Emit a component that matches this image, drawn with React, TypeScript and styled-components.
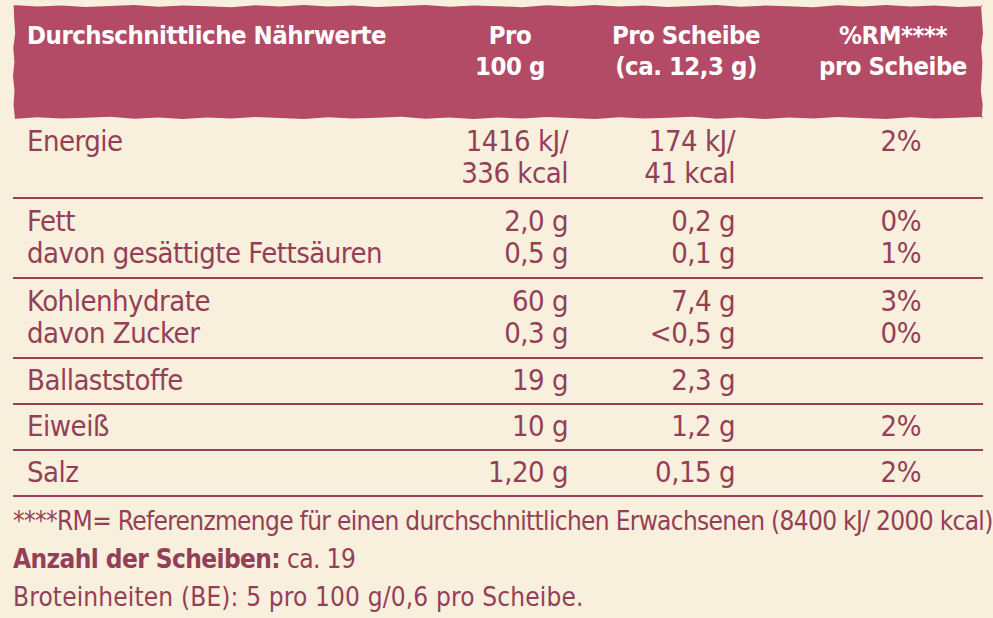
import React from "react";
import styled, { createGlobalStyle } from "styled-components";

const GlobalStyle = createGlobalStyle`
  html, body {
    margin: 0;
    background: #f8efdc;
  }
  body {
    font-family: "DejaVu Sans Condensed", "DejaVu Sans", "Liberation Sans", sans-serif;
    color: #943f58;
  }
`;

// jagged, torn paper edge for the header band
const tornEdge = (() => {
  const pts: string[] = [];
  const wob = [0, 1.5, 0.5, 2, 1, 0, 1.8, 0.6, 1.2, 2.2, 0.3, 1.4];
  for (let i = 0; i <= 40; i++) pts.push(`${(i * 2.5).toFixed(1)}% ${wob[i % 12]}px`);
  for (let i = 0; i <= 8; i++) pts.push(`calc(100% - ${wob[(i + 3) % 12]}px) ${(i * 12.5).toFixed(1)}%`);
  for (let i = 40; i >= 0; i--) pts.push(`${(i * 2.5).toFixed(1)}% calc(100% - ${wob[(i + 5) % 12]}px)`);
  for (let i = 8; i >= 0; i--) pts.push(`${wob[(i + 7) % 12]}px ${(i * 12.5).toFixed(1)}%`);
  return `polygon(${pts.join(", ")})`;
})();

const Page = styled.div`
  width: 993px;
  height: 618px;
  box-sizing: border-box;
  padding: 5px 10px 0 13px;
  overflow: hidden;
`;

const HeaderBand = styled.div`
  display: grid;
  grid-template-columns: 427px 140px 212px 1fr;
  height: 114px;
  box-sizing: border-box;
  padding-top: 15px;
  background: #b34b67;
  clip-path: ${tornEdge};
  color: #fff;
  font-weight: 700;
  font-size: 25.5px;
  letter-spacing: -0.5px;
  line-height: 31px;
`;

const HeadCell = styled.div<{ $align?: "left" | "center"; $pad?: number }>`
  text-align: ${(p) => p.$align || "center"};
  padding-left: ${(p) => p.$pad || 0}px;
  white-space: nowrap;
`;

const Row = styled.div<{ $lines: number }>`
  display: grid;
  grid-template-columns: 400px 155px 167px 186px 1fr;
  padding: ${(p) => (p.$lines > 1 ? "6px 0 8px" : "5px 0 7px")};
  border-bottom: 2px solid #9c3f5a;
  font-size: 29px;
  letter-spacing: -0.5px;
  line-height: 32px;
`;

const Label = styled.div`
  padding-left: 14px;
  white-space: nowrap;
`;

const Value = styled.div`
  text-align: right;
  white-space: nowrap;
`;

const Footer = styled.div`
  padding-top: 5px;
  font-size: 26px;
  line-height: 38px;
  white-space: nowrap;
`;

const FootLine = styled.div<{ $ls: number }>`
  letter-spacing: ${(p) => p.$ls}px;
`;

const Bold = styled.span`
  font-weight: 700;
`;

type Line = [string, string, string, string];

const rows: Line[][] = [
  [
    ["Energie", "1416 kJ/", "174 kJ/", "2%"],
    ["", "336 kcal", "41 kcal", ""],
  ],
  [
    ["Fett", "2,0 g", "0,2 g", "0%"],
    ["davon gesättigte Fettsäuren", "0,5 g", "0,1 g", "1%"],
  ],
  [
    ["Kohlenhydrate", "60 g", "7,4 g", "3%"],
    ["davon Zucker", "0,3 g", "<0,5 g", "0%"],
  ],
  [["Ballaststoffe", "19 g", "2,3 g", ""]],
  [["Eiweiß", "10 g", "1,2 g", "2%"]],
  [["Salz", "1,20 g", "0,15 g", "2%"]],
];

const col = (lines: Line[], i: number) =>
  lines.map((l, k) => (
    <React.Fragment key={k}>
      {l[i] || "\u00a0"}
      {k < lines.length - 1 && <br />}
    </React.Fragment>
  ));

export default function App() {
  return (
    <>
      <GlobalStyle />
      <Page>
        <HeaderBand>
          <HeadCell $align="left" $pad={14}>
            Durchschnittliche Nährwerte
          </HeadCell>
          <HeadCell>
            Pro
            <br />
            100 g
          </HeadCell>
          <HeadCell>
            Pro Scheibe
            <br />
            (ca. 12,3 g)
          </HeadCell>
          <HeadCell $pad={11}>
            %RM****
            <br />
            pro Scheibe
          </HeadCell>
        </HeaderBand>
        {rows.map((lines, i) => (
          <Row key={i} $lines={lines.length}>
            <Label>{col(lines, 0)}</Label>
            <Value>{col(lines, 1)}</Value>
            <Value>{col(lines, 2)}</Value>
            <Value>{col(lines, 3)}</Value>
          </Row>
        ))}
        <Footer>
          <FootLine $ls={-0.68}>
            ****RM= Referenzmenge für einen durchschnittlichen Erwachsenen (8400 kJ/ 2000 kcal)
          </FootLine>
          <FootLine $ls={-0.6}>
            <Bold>Anzahl der Scheiben:</Bold> ca. 19
          </FootLine>
          <FootLine $ls={0.15}>Broteinheiten (BE): 5 pro 100 g/0,6 pro Scheibe.</FootLine>
        </Footer>
      </Page>
    </>
  );
}
